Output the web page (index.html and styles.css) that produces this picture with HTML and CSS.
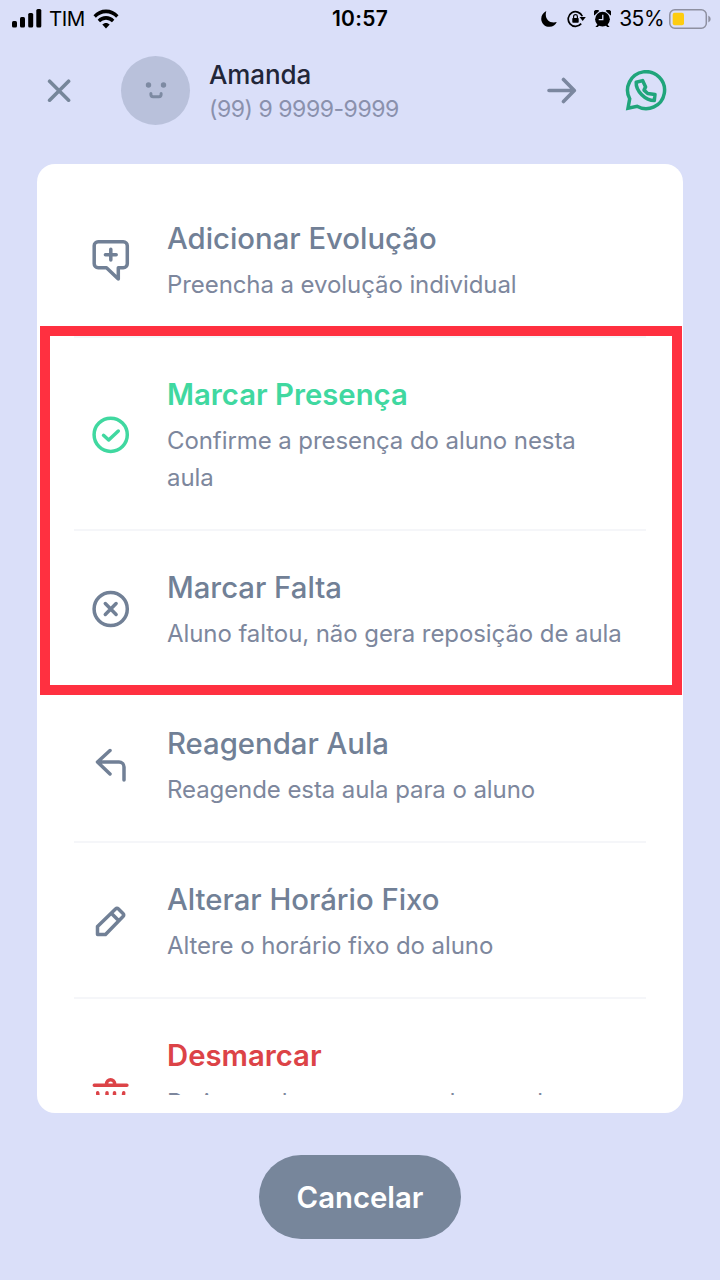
FILE: index.html
```html
<!DOCTYPE html>
<html lang="pt-BR">
<head>
<meta charset="utf-8">
<title>Amanda</title>
<link rel="stylesheet" href="styles.css">
</head>
<body>
<div class="screen">
  <div class="status">
    <div class="status-side">
      <svg class="signal" width="30" height="20" viewBox="0 0 30 20"><rect x="0" y="12" width="5" height="6.500" rx="1.500"/><rect x="8" y="8" width="5" height="10.500" rx="1.500"/><rect x="16.200" y="4" width="5" height="14.500" rx="1.500"/><rect x="24.300" y="0" width="5" height="18.500" rx="1.500"/></svg>
      <span class="carrier">TIM</span>
      <svg class="wifi" width="26" height="20" viewBox="0 0 28 20" preserveAspectRatio="none" fill="none" stroke="#000" stroke-width="3.600"><path d="M1.800 7.500C8.500 .700 19.500 .700 26.200 7.500"/><path d="M6.300 12C10.500 7.800 17.500 7.800 21.700 12"/><path d="M10 15.600C12.300 13.400 15.700 13.400 18 15.600L14 19.600Z" fill="#000" stroke="none"/></svg>
    </div>
    <span class="time">10:57</span>
    <div class="status-side right">
      <svg width="17" height="18" viewBox="0 0 18 18"><path d="M5.600 .600C1.700 2.500-.500 6.600.500 10.800 1.500 15 5.200 17.600 9.200 17.300 12.600 17.200 15.300 15.200 16.700 12.200 8.500 14.300 3.300 8.300 5.600.600Z"/></svg>
      <svg class="rotation" width="19" height="18" viewBox="0 0 19 18" fill="none" stroke="#000"><path d="M15.300 6.300A7.300 7.300 0 1 0 14.200 13.600" stroke-width="1.700"/><path d="M12.500 7H18.800L15.700 11Z" fill="#000" stroke="none"/><rect x="5.300" y="8" width="6.400" height="4.800" rx=".7" fill="#000" stroke="none"/><path d="M6.600 8V6.500a1.900 1.900 0 0 1 3.800 0V8" stroke-width="1.200"/></svg>
      <svg class="alarm" width="17" height="18" viewBox="0 0 18 18"><circle cx="9" cy="9.200" r="7.800"/><path d="M.4 5.200A3.400 3.400 0 0 1 5.500 .4ZM17.600 5.200A3.400 3.400 0 0 0 12.500 .4ZM1.500 17.500l2.500-3 1.800 1.200L4 17.500ZM16.500 17.500l-2.500-3-1.800 1.200L14 17.500Z"/><path d="M9.300 4.500V9.700H5" fill="none" stroke="#dadff9" stroke-width="1.400"/></svg>
      <span class="percent">35%</span>
      <svg class="battery" width="42" height="20" viewBox="0 0 42 20"><rect x=".8" y=".8" width="36.500" height="18.400" rx="5" fill="none" stroke="#8e90a1" stroke-width="1.500"/><rect x="3.700" y="3.700" width="11.300" height="12.600" rx="2" fill="#fdcc10"/><path d="M39.300 6.500Q41.700 7.500 41.700 10T39.300 13.500Z" fill="#8e90a1"/></svg>
    </div>
  </div>

  <div class="header">
    <svg class="close" width="24" height="24" viewBox="0 0 24 24" fill="none" stroke="#76869a" stroke-width="3.600" stroke-linecap="round"><path d="M2.600 2.200 21.600 21.200M21.600 2.200 2.600 21.200"/></svg>
    <div class="avatar">
      <svg width="24" height="20" viewBox="0 0 24 20"><circle cx="4.500" cy="4" r="2.700" fill="#7d8aa2"/><circle cx="19.500" cy="4" r="2.700" fill="#7d8aa2"/><path d="M6.900 12.500V13.600a2.200 2.200 0 0 0 2.200 2.200h5.800a2.200 2.200 0 0 0 2.200-2.200V12.500" fill="none" stroke="#7d8aa2" stroke-width="3" stroke-linecap="round"/></svg>
    </div>
    <div class="contact">
      <div class="name">Amanda</div>
      <div class="phone">(99) 9 9999-9999</div>
    </div>
    <svg class="forward" width="30" height="28" viewBox="0 0 30 28" fill="none" stroke="#7b879f" stroke-width="3.600" stroke-linecap="round" stroke-linejoin="round"><path d="M2 13.500H27M16.500 2.500 27.300 13.500 16.500 24.500"/></svg>
    <svg class="whatsapp" width="42" height="42" viewBox="0 0 42 42" fill="none" stroke="#20a57b" stroke-width="3.500"><path d="M4.700 28.800A18.500 18.500 0 1 1 12 36.300L3 38.300Z"/><path d="M11.200 12.200 17.600 10.600 20.600 16.900 19 20.100 22.700 23.500 30 24.400 29.300 30.600C20.500 30.600 10.600 21.100 11.200 12.200Z" stroke-linejoin="round"/></svg>
  </div>

  <div class="card">
    <div class="list">
      <div class="item">
        <svg class="icon" viewBox="0 0 40 44"><path d="M7.200 3.700H32.300a4 4 0 0 1 4 4V25.700a4 4 0 0 1-4 4H27.300V41L15.500 29.700H7.200a4 4 0 0 1-4-4V7.700A4 4 0 0 1 7.200 3.700ZM19.800 11.300V22.100M14.400 16.700H25.200"/></svg>
        <div class="text"><div class="title">Adicionar Evolução</div><div class="sub">Preencha a evolução individual</div></div>
      </div>
      <div class="item present">
        <svg class="icon" viewBox="0 0 40 44"><circle cx="19.700" cy="21.800" r="16.600"/><path d="M12.500 22.300 17.700 27 27.300 18"/></svg>
        <div class="text"><div class="title strong">Marcar Presença</div><div class="sub">Confirme a presença do aluno nesta<br>aula</div></div>
      </div>
      <div class="item">
        <svg class="icon" viewBox="0 0 40 44"><circle cx="19.700" cy="22" r="16.600"/><path d="M14.300 16.600l10.800 10.800M25.100 16.600l-10.800 10.800"/></svg>
        <div class="text"><div class="title">Marcar Falta</div><div class="sub">Aluno faltou, não gera reposição de aula</div></div>
      </div>
      <div class="item">
        <svg class="icon" viewBox="0 0 40 44"><path d="M19 7.500 6.500 19 19 31M7 19H28A5 5 0 0 1 33 24V37"/></svg>
        <div class="text"><div class="title">Reagendar Aula</div><div class="sub">Reagende esta aula para o aluno</div></div>
      </div>
      <div class="item">
        <svg class="icon" viewBox="0 0 40 44"><path d="M6.500 35.500V27.500L24.500 10Q26 8.500 27.500 10L32 14.500Q33.500 16 32 17.500L14.500 35.500ZM20.300 14.300 27.800 21.800"/></svg>
        <div class="text"><div class="title">Alterar Horário Fixo</div><div class="sub">Altere o horário fixo do aluno</div></div>
      </div>
      <div class="item cancel">
        <svg class="icon" viewBox="0 0 40 44"><path d="M3.300 11.300H35.900M15.500 10.800V9.800a4.100 4.100 0 0 1 8.200 0v1M6.700 18.800 8.500 38.500H31L32.700 18.800M16 18.800V30M23.500 18.800V30"/></svg>
        <div class="text"><div class="title strong">Desmarcar</div><div class="sub">Retirar o aluno somente desta aula<br>&nbsp;</div></div>
      </div>
    </div>
    <div class="highlight"></div>
  </div>

  <button class="button">Cancelar</button>
</div>
</body>
</html>
```
FILE: styles.css
```css
* { box-sizing: border-box; }
body { margin: 0; background: #dadff9; font-family: Inter, "Liberation Sans", sans-serif; }
svg { display: block; flex: none; }
.screen { width: 720px; height: 1280px; display: flex; flex-direction: column; overflow: hidden; }
.status { height: 37px; padding: 0 10px 0 12px; display: grid; grid-template-columns: 1fr auto 1fr; align-items: center; color: #000; }
.status-side { display: flex; align-items: center; }
.right { justify-content: flex-end; }
.carrier { margin: 0 8px 0 7px; font-size: 20.5px; letter-spacing: -.5px; }
.time { margin-right: 2px; font-size: 21px; font-weight: 600; letter-spacing: .3px; }
.rotation { margin-left: 9px; }
.alarm { margin-left: 8px; }
.percent { margin-left: 8px; font-size: 21px; letter-spacing: -.5px; }
.battery { margin: 0 -1px 0 5px; }
.header { height: 107px; padding: 0 53px 0 47px; display: flex; align-items: center; }
.avatar { width: 69px; height: 69px; margin-left: 50px; border-radius: 50%; background: #b9c1db; display: flex; align-items: center; justify-content: center; }
.contact { margin: 3px 0 0 19px; width: 200px; }
.name { font-size: 26px; line-height: 34px; font-weight: 500; color: #222638; letter-spacing: -.1px; }
.phone { font-size: 23px; line-height: 34px; color: #8a91ad; white-space: nowrap; letter-spacing: -.46px; }
.forward { margin-left: auto; }
.whatsapp { margin-left: 48px; }
.card { position: relative; height: 949px; margin: 20px 37px 0; padding: 18px 0; border-radius: 18px; background: #fff; }
.list { height: 913px; padding: 0 37px; overflow: hidden; }
.item { display: flex; align-items: center; min-height: 156px; padding: 34px 0 33px 17px; border-bottom: 2px solid #f5f6f9; color: #718096; }
.icon { width: 40px; height: 44px; margin: 1px 36px 0 0; fill: none; stroke: currentColor; stroke-width: 3.5; stroke-linecap: round; stroke-linejoin: round; }
.title { font-size: 29.3px; line-height: 45px; margin-bottom: 5px; font-weight: 500; white-space: nowrap; }
.strong { font-weight: 600; }
.sub { font-size: 24px; line-height: 37px; color: #7d879d; white-space: nowrap; letter-spacing: -.08px; }
.present { color: #40d8a0; }
.cancel { color: #dc4347; }
.cancel .title { margin-bottom: 6px; }
.highlight { position: absolute; left: 3px; top: 162px; width: 642px; height: 369px; border: 10px solid #ff3040; }
.button { align-self: center; width: 202px; height: 84px; margin-top: 42px; border: 0; border-radius: 42px; background: #77869b; color: #fff; font: 600 29.3px Inter, sans-serif; }
```
